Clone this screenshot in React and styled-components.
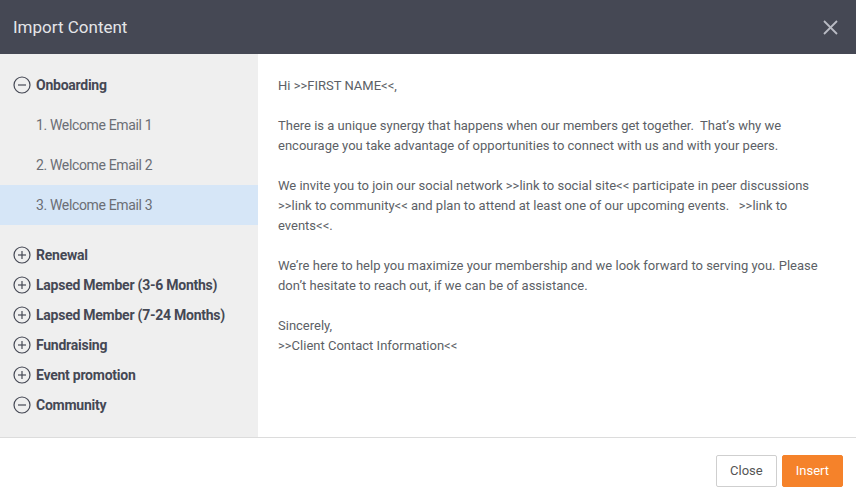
import React, { useState } from 'react';
import styled, { createGlobalStyle } from 'styled-components';

const GlobalStyle = createGlobalStyle`
  html, body { margin: 0; padding: 0; background: #fff; }
  body { font-family: Roboto, "Liberation Sans", sans-serif; }
  * { box-sizing: border-box; }
`;

const Modal = styled.div`
  width: 856px;
  height: 499px;
  display: flex;
  flex-direction: column;
  background: #fff;
`;

const Header = styled.div`
  height: 54px;
  flex: none;
  background: #454854;
  display: flex;
  align-items: center;
  justify-content: space-between;
  padding: 0 17px 0 13px;
`;

const Title = styled.h2`
  margin: 0;
  font-size: 17px;
  font-weight: 400;
  color: #e4e5e8;
`;

const CloseX = styled.button`
  border: 0;
  background: transparent;
  padding: 0;
  width: 18px;
  height: 18px;
  cursor: pointer;
  display: flex;
  align-items: center;
  justify-content: center;
`;

const Body = styled.div`
  flex: 1;
  display: flex;
  border-bottom: 1px solid #dcdcdc;
`;

const Sidebar = styled.div`
  width: 258px;
  flex: none;
  background: #efefef;
  padding-top: 16px;
`;

const Group = styled.div`
  height: 30px;
  display: flex;
  align-items: center;
  padding-left: 13px;
  gap: 5px;
  font-size: 14px;
  font-weight: 700;
  letter-spacing: -0.25px;
  color: #454854;
  cursor: pointer;
`;

const Item = styled.div`
  height: 40px;
  display: flex;
  align-items: center;
  padding-left: 36px;
  font-size: 14px;
  letter-spacing: -0.35px;
  color: #6b6e75;
  background: ${p => (p.active ? '#d6e6f7' : 'transparent')};
  cursor: pointer;
`;

const Spacer = styled.div`
  height: ${p => p.h}px;
`;

const Content = styled.div`
  flex: 1;
  padding: 22px 20px 0 20px;
  color: #5c5f66;
  font-size: 13px;
  line-height: 20px;
`;

const Para = styled.p`
  margin: 0 0 20px 0;
`;

const Footer = styled.div`
  height: 61px;
  flex: none;
  display: flex;
  align-items: center;
  justify-content: flex-end;
  gap: 5px;
  padding: 4px 13px 0 0;
`;

const Button = styled.button`
  height: 32px;
  padding: 0 13px;
  font-family: Roboto, "Liberation Sans", sans-serif;
  font-size: 13px;
  border-radius: 2px;
  cursor: pointer;
  border: 1px solid ${p => (p.primary ? '#f5822a' : '#cfcfcf')};
  background: ${p => (p.primary ? '#f5822a' : '#fff')};
  color: ${p => (p.primary ? '#fff' : '#555')};
`;

const CircleIcon = ({ open }) => (
  <svg width="18" height="18" viewBox="0 0 18 18" fill="none" stroke="#454854" strokeWidth="1.2">
    <circle cx="9" cy="9" r="8" />
    <line x1="5" y1="9" x2="13" y2="9" />
    {!open && <line x1="9" y1="5" x2="9" y2="13" />}
  </svg>
);

const groups = [
  { name: 'Onboarding', open: true, items: ['1. Welcome Email 1', '2. Welcome Email 2', '3. Welcome Email 3'] },
  { name: 'Renewal' },
  { name: 'Lapsed Member (3-6 Months)' },
  { name: 'Lapsed Member (7-24 Months)' },
  { name: 'Fundraising' },
  { name: 'Event promotion' },
  { name: 'Community', open: true },
];

export default function App() {
  const [active, setActive] = useState('3. Welcome Email 3');
  return (
    <Modal>
      <GlobalStyle />
      <Header>
        <Title>Import Content</Title>
        <CloseX>
          <svg width="15" height="15" viewBox="0 0 15 15" stroke="#b9bcc4" strokeWidth="1.8">
            <line x1="1" y1="1" x2="14" y2="14" />
            <line x1="14" y1="1" x2="1" y2="14" />
          </svg>
        </CloseX>
      </Header>
      <Body>
        <Sidebar>
          {groups.map(g => (
            <React.Fragment key={g.name}>
              <Group>
                <CircleIcon open={g.open} />
                {g.name}
              </Group>
              {g.items && (
                <>
                  <Spacer h={5} />
                  {g.items.map(it => (
                    <Item key={it} active={active === it} onClick={() => setActive(it)}>{it}</Item>
                  ))}
                  <Spacer h={15} />
                </>
              )}
            </React.Fragment>
          ))}
        </Sidebar>
        <Content>
          <Para>Hi &gt;&gt;FIRST NAME&lt;&lt;,</Para>
          <Para>There is a unique synergy that happens when our members get together.&nbsp; That’s why we encourage you take advantage of opportunities to connect with us and with your peers.</Para>
          <Para>We invite you to join our social network &gt;&gt;link to social site&lt;&lt; participate in peer discussions &gt;&gt;link to community&lt;&lt; and plan to attend at least one of our upcoming events.&nbsp;&nbsp; &gt;&gt;link to events&lt;&lt;.</Para>
          <Para>We’re here to help you maximize your membership and we look forward to serving you. Please don’t hesitate to reach out, if we can be of assistance.</Para>
          <Para>Sincerely,<br />&gt;&gt;Client Contact Information&lt;&lt;</Para>
        </Content>
      </Body>
      <Footer>
        <Button>Close</Button>
        <Button primary>Insert</Button>
      </Footer>
    </Modal>
  );
}
